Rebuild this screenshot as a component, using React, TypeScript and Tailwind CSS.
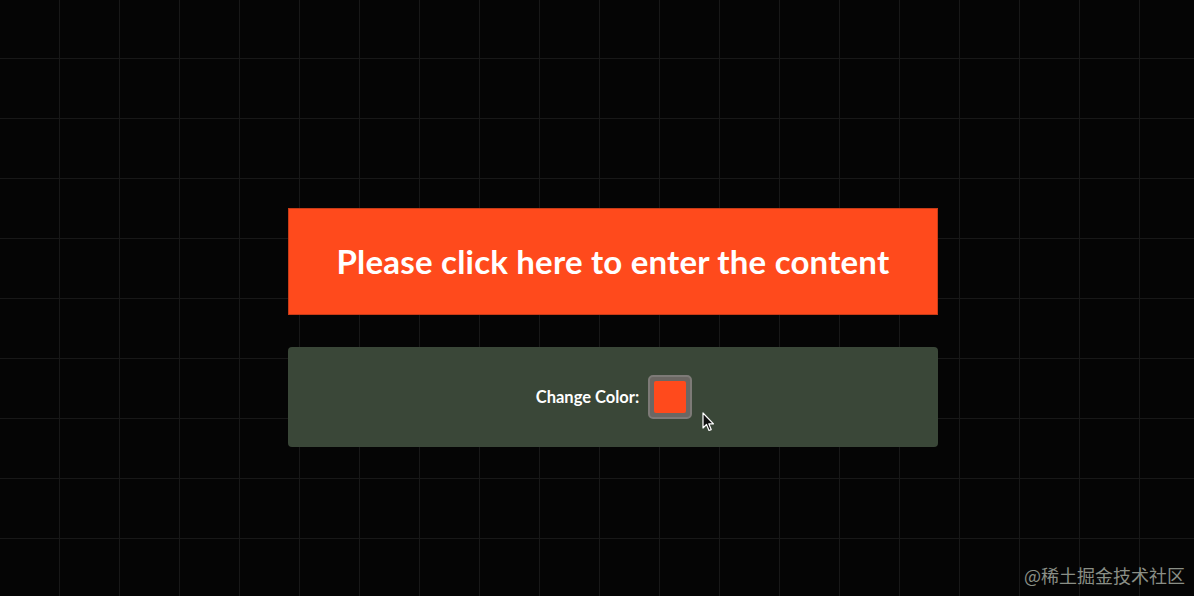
import React from "react";

function Cursor() {
  return (
    <svg
      className="absolute left-[702px] top-[412px]"
      width="14"
      height="21"
      viewBox="0 0 14 21"
    >
      <path
        d="M1 1 L1 16 L4.5 12.5 L7 18.5 L9.2 17.6 L6.8 11.8 L11.5 11.8 Z"
        fill="#111"
        stroke="#fff"
        strokeWidth="1.2"
        strokeLinejoin="round"
      />
    </svg>
  );
}

export default function App() {
  const [color] = React.useState("#ff4a1c");

  return (
    <div className="relative w-[1194px] h-[596px] overflow-hidden bg-[#050505] bg-[linear-gradient(to_right,#181818_1px,transparent_1px),linear-gradient(to_bottom,#181818_1px,transparent_1px)] bg-[size:60px_60px] bg-[position:59px_58px] font-['Lato','Open_Sans',sans-serif]">
      <div className="flex flex-col gap-8 pt-[208px] pl-[288px]">
        <div
          className="flex h-[107px] w-[650px] items-center justify-center border border-[#c73c18]"
          style={{ backgroundColor: color }}
        >
          <span className="text-[33px] font-bold text-white tracking-[0.2px]">
            Please click here to enter the content
          </span>
        </div>
        <div className="flex h-[100px] w-[650px] items-center justify-center gap-[9px] rounded-[4px] bg-[#3a4738] pl-[2px]">
          <span className="text-[16.5px] font-bold text-white">Change Color:</span>
          <div className="flex h-[44px] w-[44px] items-center justify-center rounded-[5px] border-2 border-[#7d7a77] bg-[#6b6763]">
            <div
              className="h-[32px] w-[32px] rounded-[2px]"
              style={{ backgroundColor: color }}
            />
          </div>
        </div>
      </div>
      <Cursor />
      <div className="absolute right-[9px] bottom-[7px] text-[18px] text-[#8a8f86] font-['Noto_Sans_CJK_SC',sans-serif]">
        @稀土掘金技术社区
      </div>
    </div>
  );
}
